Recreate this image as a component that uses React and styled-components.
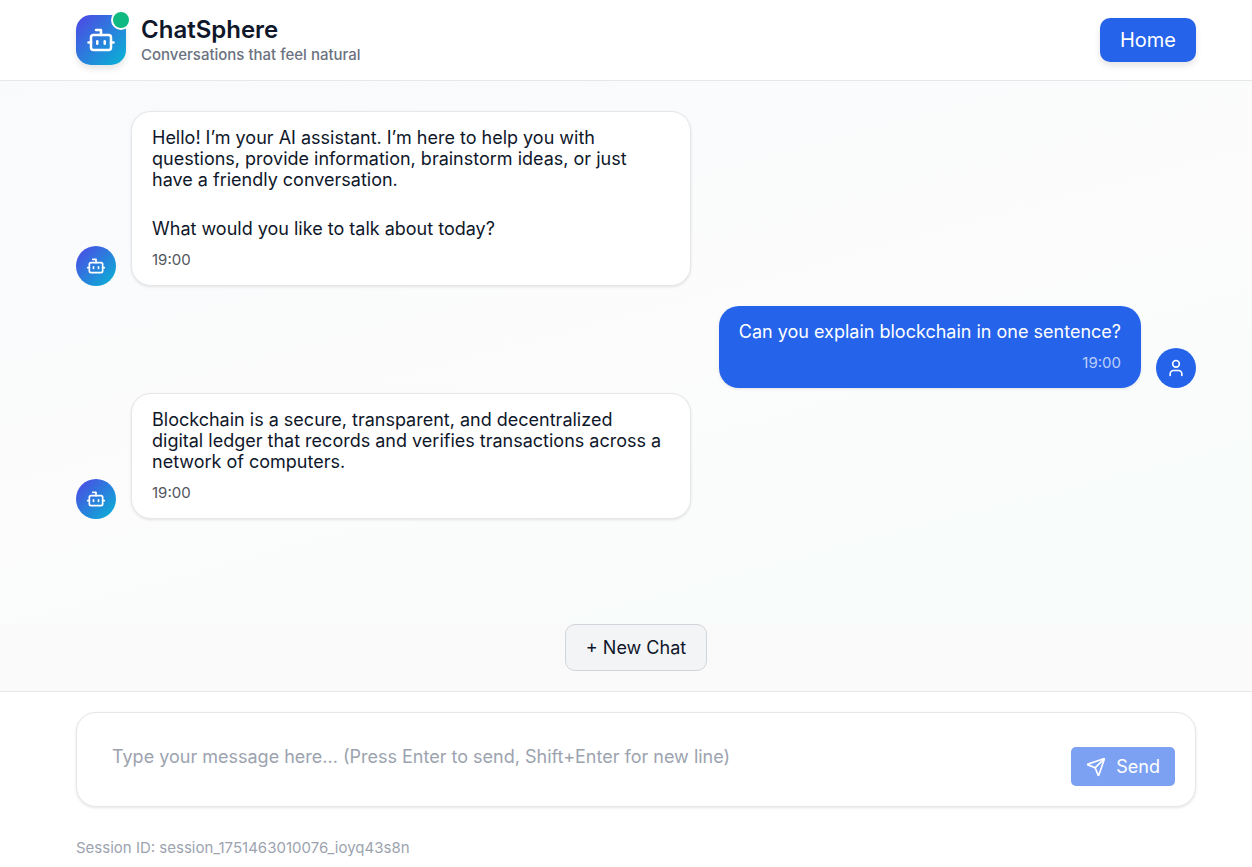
import React, { useState } from "react";
import styled, { createGlobalStyle, css } from "styled-components";
import { Bot, Send, User } from "lucide-react";

const GlobalStyle = createGlobalStyle`
  *, *::before, *::after { box-sizing: border-box; }
  body {
    margin: 0;
    background: #fafafa;
    color: #0f172a;
    font-family: Inter, "Liberation Sans", sans-serif;
    font-size: 18px;
  }
  button, textarea { font: inherit; }
`;

const Page = styled.div`
  display: flex;
  flex-direction: column;
  min-height: 100vh;
`;

const gutters = css`
  padding-left: 76px;
  padding-right: 56px;
`;

const Header = styled.header`
  ${gutters}
  display: flex;
  align-items: center;
  justify-content: space-between;
  height: 81px;
  background: #fff;
  border-bottom: 1px solid #e5e7eb;
`;

const Brand = styled.div`
  display: flex;
  align-items: center;
  gap: 15px;
`;

const Logo = styled.div`
  position: relative;
  display: grid;
  place-items: center;
  width: 50px;
  height: 50px;
  border-radius: 15px;
  color: #fff;
  background: linear-gradient(135deg, #4f46e5, #06b6d4);
  box-shadow: 0 4px 6px rgba(0, 0, 0, 0.1);
`;

const OnlineDot = styled.span`
  position: absolute;
  top: -5px;
  right: -5px;
  width: 20px;
  height: 20px;
  border: 2px solid #fff;
  border-radius: 50%;
  background: #10b981;
`;

const Title = styled.h1`
  margin: 0;
  font-size: 24px;
  line-height: 30px;
  font-weight: 600;
`;

const Tagline = styled.p`
  margin: 0;
  color: #6b7280;
  font-size: 15px;
  line-height: 20px;
  font-weight: 500;
`;

const HomeButton = styled.button`
  height: 44px;
  padding: 0 20px;
  border: 0;
  border-radius: 10px;
  color: #fff;
  background: #2563eb;
  box-shadow: 0 4px 6px rgba(0, 0, 0, 0.1);
  font-size: 20px;
`;

const Messages = styled.main`
  ${gutters}
  flex: 1;
  display: flex;
  flex-direction: column;
  padding-top: 30px;
  padding-bottom: 30px;
  background: linear-gradient(165deg, #f8fafc 0%, #fcfcfc 50%, #f7fcfb 100%);
`;

const Row = styled.article`
  display: flex;
  align-items: flex-end;
  gap: 15px;
  flex-direction: ${(p) => (p.$mine ? "row-reverse" : "row")};
  margin-bottom: ${(p) => (p.$mine ? "5px" : "20px")};
`;

const Avatar = styled.div`
  display: grid;
  place-items: center;
  flex: none;
  width: 40px;
  height: 40px;
  border-radius: 50%;
  color: #fff;
  background: ${(p) => (p.$mine ? "#2563eb" : "linear-gradient(135deg, #4f46e5, #06b6d4)")};
`;

const Bubble = styled.div`
  max-width: 50%;
  padding: 15px 20px;
  border: ${(p) => (p.$mine ? "0" : "1px solid #e5e7eb")};
  border-radius: 20px;
  color: ${(p) => (p.$mine ? "#fff" : "#0f172a")};
  background: ${(p) => (p.$mine ? "#2563eb" : "#fff")};
  box-shadow: 0 1px 3px rgba(0, 0, 0, 0.1);
`;

const Paragraph = styled.p`
  margin: 0;
  line-height: 21px;
  white-space: pre-line;

  & + & { margin-top: 28px; }
`;

const Time = styled.time`
  display: block;
  margin-top: 11px;
  color: ${(p) => (p.$mine ? "rgba(255, 255, 255, 0.7)" : "#52555c")};
  font-size: 15px;
  line-height: 20px;
  text-align: ${(p) => (p.$mine ? "right" : "left")};
`;

const Actions = styled.div`
  ${gutters}
  display: flex;
  justify-content: center;
  padding-bottom: 20px;
`;

const NewChatButton = styled.button`
  height: 47px;
  padding: 0 20px;
  border: 1px solid #d1d5db;
  border-radius: 10px;
  color: #0f172a;
  background: #f3f4f6;
`;

const Footer = styled.footer`
  ${gutters}
  padding-top: 20px;
  padding-bottom: 9px;
  border-top: 1px solid #e5e7eb;
  background: #fff;
`;

const Composer = styled.form`
  display: flex;
  align-items: flex-end;
  gap: 15px;
  height: 95px;
  padding: 20px;
  border: 1px solid #e5e7eb;
  border-radius: 20px;
  background: #fff;
  box-shadow: 0 1px 3px rgba(0, 0, 0, 0.1);
`;

const MessageInput = styled.textarea`
  flex: 1;
  min-width: 0;
  height: 54px;
  padding: 13px 15px;
  border: 0;
  outline: 0;
  resize: none;
  color: #0f172a;
  background: transparent;
  line-height: 24px;

  &::placeholder { color: #9ca3af; opacity: 1; }
`;

const SendButton = styled.button`
  display: flex;
  align-items: center;
  gap: 10px;
  height: 39px;
  padding: 0 15px;
  border: 0;
  border-radius: 5px;
  color: #fff;
  background: #2563eb;

  &:disabled { background: #7ca1f3; }
`;

const Session = styled.p`
  margin: 31px 0 0;
  color: #9ca3af;
  font-size: 15px;
  line-height: 20px;
`;

const conversation = [
  {
    id: 1,
    text: [
      "Hello! I’m your AI assistant. I’m here to help you with questions, provide information, brainstorm ideas, or just have a friendly conversation.",
      "What would you like to talk about today?",
    ],
  },
  { id: 2, mine: true, text: ["Can you explain blockchain in one sentence?"] },
  {
    id: 3,
    text: [
      "Blockchain is a secure, transparent, and decentralized\ndigital ledger that records and verifies transactions across a network of computers.",
    ],
  },
];

function Message({ mine, text }) {
  const Icon = mine ? User : Bot;
  return (
    <Row $mine={mine}>
      <Avatar $mine={mine}>
        <Icon size={20} />
      </Avatar>
      <Bubble $mine={mine}>
        {text.map((line) => (
          <Paragraph key={line}>{line}</Paragraph>
        ))}
        <Time $mine={mine}>19:00</Time>
      </Bubble>
    </Row>
  );
}

export default function App() {
  const [draft, setDraft] = useState("");
  return (
    <>
      <GlobalStyle />
      <Page>
        <Header>
          <Brand>
            <Logo>
              <Bot size={30} />
              <OnlineDot />
            </Logo>
            <div>
              <Title>ChatSphere</Title>
              <Tagline>Conversations that feel natural</Tagline>
            </div>
          </Brand>
          <HomeButton type="button">Home</HomeButton>
        </Header>
        <Messages>
          {conversation.map((m) => (
            <Message key={m.id} mine={m.mine} text={m.text} />
          ))}
        </Messages>
        <Actions>
          <NewChatButton type="button">+ New Chat</NewChatButton>
        </Actions>
        <Footer>
          <Composer onSubmit={(e) => e.preventDefault()}>
            <MessageInput
              aria-label="Message"
              placeholder="Type your message here... (Press Enter to send, Shift+Enter for new line)"
              value={draft}
              onChange={(e) => setDraft(e.target.value)}
            />
            <SendButton type="submit" disabled={!draft.trim()}>
              <Send size={20} />
              Send
            </SendButton>
          </Composer>
          <Session>Session ID: session_1751463010076_ioyq43s8n</Session>
        </Footer>
      </Page>
    </>
  );
}
